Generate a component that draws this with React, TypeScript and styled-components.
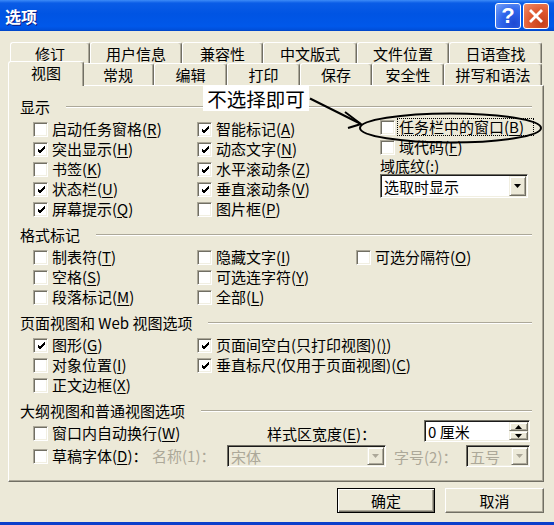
import React from 'react';
import styled, { createGlobalStyle, css } from 'styled-components';

const FONT = `"Noto Sans CJK SC", "Noto Sans", "DejaVu Sans", sans-serif`;

const GlobalStyle = createGlobalStyle`
  html, body { margin: 0; padding: 0; background: #ECE9D8; }
  body { font-family: ${FONT}; font-size: 15px; color: #000; }
  * { box-sizing: border-box; }
`;

const Window = styled.div`
  position: relative;
  width: 554px;
  height: 525px;
  display: flex;
  flex-direction: column;
  background: #ECE9D8;
  border-bottom: 3px solid #0B3FCB;
  overflow: hidden;
`;

const TitleBar = styled.div`
  height: 31px;
  flex: none;
  display: flex;
  align-items: center;
  padding: 0 5px;
  background: linear-gradient(to bottom, #3D8BF7 0%, #0A5CE6 10%, #0054E3 45%, #0058EA 85%, #0050DC 95%, #0043C4 100%);
`;

const Title = styled.span`
  color: #fff;
  font-weight: 700;
  font-size: 16px;
  line-height: 1;
  text-shadow: 1px 1px 0 #0A1883;
`;

const CaptionButtons = styled.div`
  margin-left: auto;
  align-self: flex-start;
  margin-top: 3px;
  display: flex;
  gap: 2px;
`;

const CaptionButton = styled.div<{ $kind: 'help' | 'close' }>`
  width: 26px;
  height: 26px;
  border: 1px solid #fff;
  border-radius: 3px;
  display: flex;
  align-items: center;
  justify-content: center;
  color: #fff;
  font-family: "Liberation Sans", Arial, sans-serif;
  font-weight: 700;
  font-size: 22px;
  line-height: 1;
  background: ${p =>
    p.$kind === 'close'
      ? 'radial-gradient(circle at 75% 80%, #C5401A 0%, #E05A31 50%, #F08E6C 100%)'
      : 'radial-gradient(circle at 75% 80%, #1E49D2 0%, #2F66EC 50%, #78A3F8 100%)'};
`;

const Body = styled.div`
  flex: 1;
  display: flex;
  flex-direction: column;
  padding: 11px 10px 0 8px;
`;

const TabStrip = styled.div`
  display: flex;
  flex-direction: column;
  padding-left: 2px;
`;

const TabRow = styled.div<{ $h: number }>`
  display: flex;
  height: ${p => p.$h}px;
`;

const Tab = styled.div<{ $w: number; $active?: boolean }>`
  flex: none;
  width: ${p => p.$w}px;
  height: 100%;
  display: flex;
  align-items: center;
  justify-content: center;
  background: #ECE9D8;
  border-top: 1px solid #fff;
  border-left: 1px solid #fff;
  border-right: 1px solid #716F64;
  box-shadow: inset -1px 0 #ACA899;
  border-radius: 3px 3px 0 0;
  font-size: 15px;
  line-height: 1;
  white-space: nowrap;
  ${p =>
    p.$active &&
    css`
      position: relative;
      z-index: 2;
      width: ${p.$w + 4}px;
      margin: -2px -2px 0 -2px;
      height: calc(100% + 3px);
      padding-bottom: 3px;
    `}
`;

const Panel = styled.div`
  position: relative;
  flex: none;
  width: 536px;
  height: 397px;
  border: 1px solid;
  border-color: #fff #716F64 #716F64 #fff;
  box-shadow: inset -1px -1px #ACA899;
  padding: 12px 11px 0 11px;
`;

const Section = styled.section`
  & + & {
    margin-top: 7px;
  }
`;

const SectionHead = styled.div`
  display: flex;
  align-items: center;
  gap: 16px;
  height: 18px;
  line-height: 18px;
  white-space: nowrap;
`;

const Rule = styled.div`
  flex: 1;
  border-top: 1px solid #ACA899;
  border-bottom: 1px solid #fff;
`;

const Columns = styled.div`
  display: flex;
  margin: 3px 0 0 13px;
`;

const Column = styled.div<{ $w?: number; $shift?: number }>`
  display: flex;
  flex-direction: column;
  ${p => (p.$w ? `width: ${p.$w}px; flex: none;` : 'flex: 1;')}
  margin-top: ${p => p.$shift ?? 0}px;
`;

const CheckRow = styled.div`
  display: flex;
  align-items: center;
  gap: 4px;
  height: 20px;
  white-space: nowrap;
`;

const Box = styled.span`
  width: 15px;
  height: 15px;
  flex: none;
  display: flex;
  align-items: center;
  justify-content: center;
  background: #fff;
  border: 1px solid;
  border-color: #ACA899 #fff #fff #ACA899;
  box-shadow: inset 1px 1px #716F64, inset -1px -1px #F1EFE2;
`;

const Label = styled.span<{ $focus?: boolean; $disabled?: boolean }>`
  line-height: 18px;
  color: ${p => (p.$disabled ? '#ACA899' : '#000')};
  ${p =>
    p.$focus &&
    css`
      border: 1px dotted #000;
      margin-left: -2px;
      padding: 0 9px 0 1px;
      line-height: 16px;
    `}
`;

const Key = styled.u`
  text-decoration: underline;
  text-underline-offset: 2px;
`;

const FieldLabel = styled.div`
  height: 17px;
  line-height: 17px;
  white-space: nowrap;
`;

const Field = styled.div<{ $w: number; $h: number; $disabled?: boolean }>`
  width: ${p => p.$w}px;
  height: ${p => p.$h}px;
  flex: none;
  display: flex;
  align-items: stretch;
  padding: 1px;
  border: 1px solid;
  border-color: #716F64 #fff #fff #716F64;
  box-shadow: inset 1px 1px #1A1A1A, inset -1px -1px #F1EFE2;
  background: ${p => (p.$disabled ? '#ECE9D8' : '#fff')};
`;

const SpinField = styled(Field)`
  align-self: start;
  margin-top: -2px;
`;

const FieldText = styled.span<{ $disabled?: boolean }>`
  flex: 1;
  display: flex;
  align-items: center;
  padding-left: 2px;
  line-height: 1;
  white-space: nowrap;
  color: ${p => (p.$disabled ? '#ACA899' : '#000')};
`;

const RaisedButton = styled.span`
  display: flex;
  align-items: center;
  justify-content: center;
  background: #ECE9D8;
  border: 1px solid;
  border-color: #F1EFE2 #716F64 #716F64 #F1EFE2;
  box-shadow: inset 1px 1px #fff, inset -1px -1px #ACA899;
`;

const DropButton = styled(RaisedButton)`
  width: 17px;
  flex: none;
`;

const SpinButtons = styled.span`
  width: 19px;
  flex: none;
  display: flex;
  flex-direction: column;
`;

const SpinButton = styled(RaisedButton)`
  flex: 1;
`;

const Rows = styled.div`
  display: flex;
  flex-direction: column;
  gap: 1px;
  margin: 2px 0 0 13px;
`;

const GridRow = styled.div<{ $cols: string }>`
  display: grid;
  grid-template-columns: ${p => p.$cols};
  align-items: center;
  height: 22px;
  white-space: nowrap;
`;

const Indented = styled.span`
  padding-left: 8px;
  color: #ACA899;
`;

const ButtonBar = styled.div`
  display: flex;
  justify-content: flex-end;
  gap: 10px;
  margin-top: 6px;
`;

const DialogButton = styled.div<{ $w: number; $default?: boolean }>`
  width: ${p => p.$w}px;
  height: 25px;
  display: flex;
  align-items: center;
  justify-content: center;
  background: #ECE9D8;
  line-height: 1;
  ${p =>
    p.$default
      ? css`
          border: 1px solid #000;
          box-shadow: inset 1px 1px #fff, inset -1px -1px #716F64, inset -2px -2px #ACA899;
        `
      : css`
          border: 1px solid;
          border-color: #fff #716F64 #716F64 #fff;
          box-shadow: inset -1px -1px #ACA899;
        `}
`;

const Note = styled.div`
  position: absolute;
  left: 203px;
  top: 86px;
  width: 106px;
  height: 25px;
  background: #fff;
  display: flex;
  align-items: center;
  justify-content: center;
  font-size: 19.5px;
  line-height: 1;
  z-index: 5;
`;

const Markup = styled.svg`
  position: absolute;
  left: 0;
  top: 0;
  pointer-events: none;
  z-index: 6;
`;

const Check = () => (
  <svg width="8" height="7" viewBox="0 0 7 7" shapeRendering="crispEdges">
    <polygon points="0,2.4 2.4,4.8 7,0.2 7,2.6 2.4,7.2 0,4.8" fill="#000" />
  </svg>
);

const Tri = ({ up, color = '#000' }: { up?: boolean; color?: string }) => (
  <svg width="7" height="4" viewBox="0 0 7 4">
    <polygon points={up ? '0,4 7,4 3.5,0' : '0,0 7,0 3.5,4'} fill={color} />
  </svg>
);

type OptProps = { text: string; k: string; checked?: boolean; focus?: boolean };

const Opt = ({ text, k, checked, focus }: OptProps) => (
  <CheckRow>
    <Box>{checked && <Check />}</Box>
    <Label $focus={focus}>
      {text}(<Key>{k}</Key>)
    </Label>
  </CheckRow>
);

const backTabs: [string, number][] = [
  ['修订', 80],
  ['用户信息', 92],
  ['兼容性', 81],
  ['中文版式', 94],
  ['文件位置', 92],
  ['日语查找', 93],
];

const frontTabs: [string, number][] = [
  ['视图', 72],
  ['常规', 72],
  ['编辑', 73],
  ['打印', 73],
  ['保存', 72],
  ['安全性', 72],
  ['拼写和语法', 98],
];

export default function App() {
  return (
    <>
      <GlobalStyle />
      <Window>
        <TitleBar>
          <Title>选项</Title>
          <CaptionButtons>
            <CaptionButton $kind="help">?</CaptionButton>
            <CaptionButton $kind="close">
              <svg width="14" height="14" viewBox="0 0 14 14">
                <path d="M2 2 L12 12 M12 2 L2 12" stroke="#fff" strokeWidth="2.8" strokeLinecap="square" />
              </svg>
            </CaptionButton>
          </CaptionButtons>
        </TitleBar>

        <Body>
          <TabStrip>
            <TabRow $h={21}>
              {backTabs.map(([t, w]) => (
                <Tab key={t} $w={w}>{t}</Tab>
              ))}
            </TabRow>
            <TabRow $h={22}>
              {frontTabs.map(([t, w], i) => (
                <Tab key={t} $w={w} $active={i === 0}>{t}</Tab>
              ))}
            </TabRow>
          </TabStrip>

          <Panel>
            <Section>
              <SectionHead>显示<Rule /></SectionHead>
              <Columns>
                <Column $w={164}>
                  <Opt text="启动任务窗格" k="R" />
                  <Opt text="突出显示" k="H" checked />
                  <Opt text="书签" k="K" />
                  <Opt text="状态栏" k="U" checked />
                  <Opt text="屏幕提示" k="Q" checked />
                </Column>
                <Column $w={183}>
                  <Opt text="智能标记" k="A" checked />
                  <Opt text="动态文字" k="N" checked />
                  <Opt text="水平滚动条" k="Z" checked />
                  <Opt text="垂直滚动条" k="V" checked />
                  <Opt text="图片框" k="P" />
                </Column>
                <Column $shift={-2}>
                  <Opt text="任务栏中的窗口" k="B" focus />
                  <Opt text="域代码" k="F" />
                  <FieldLabel>域底纹(<Key>:</Key>)</FieldLabel>
                  <Field $w={148} $h={24}>
                    <FieldText>选取时显示</FieldText>
                    <DropButton><Tri /></DropButton>
                  </Field>
                </Column>
              </Columns>
            </Section>

            <Section>
              <SectionHead>格式标记<Rule /></SectionHead>
              <Columns>
                <Column $w={164}>
                  <Opt text="制表符" k="T" />
                  <Opt text="空格" k="S" />
                  <Opt text="段落标记" k="M" />
                </Column>
                <Column $w={159}>
                  <Opt text="隐藏文字" k="I" />
                  <Opt text="可选连字符" k="Y" />
                  <Opt text="全部" k="L" />
                </Column>
                <Column>
                  <Opt text="可选分隔符" k="O" />
                </Column>
              </Columns>
            </Section>

            <Section>
              <SectionHead>页面视图和 Web 视图选项<Rule /></SectionHead>
              <Columns>
                <Column $w={164}>
                  <Opt text="图形" k="G" checked />
                  <Opt text="对象位置" k="I" />
                  <Opt text="正文边框" k="X" />
                </Column>
                <Column>
                  <Opt text="页面间空白(只打印视图)" k=")" checked />
                  <Opt text="垂直标尺(仅用于页面视图)" k="C" checked />
                </Column>
              </Columns>
            </Section>

            <Section>
              <SectionHead>大纲视图和普通视图选项<Rule /></SectionHead>
              <Rows>
                <GridRow $cols="234px 157px 106px">
                  <Opt text="窗口内自动换行" k="W" />
                  <span>样式区宽度(<Key>E</Key>)：</span>
                  <SpinField $w={106} $h={22}>
                    <FieldText>0 厘米</FieldText>
                    <SpinButtons>
                      <SpinButton><Tri up /></SpinButton>
                      <SpinButton><Tri /></SpinButton>
                    </SpinButtons>
                  </SpinField>
                </GridRow>
                <GridRow $cols="119px 75px 159px 80px 64px">
                  <CheckRow>
                    <Box />
                    <Label>草稿字体(<Key>D</Key>)：</Label>
                  </CheckRow>
                  <Label $disabled>名称(1)：</Label>
                  <Field $w={159} $h={22} $disabled>
                    <FieldText $disabled>宋体</FieldText>
                    <DropButton><Tri color="#ACA899" /></DropButton>
                  </Field>
                  <Indented>字号(2)：</Indented>
                  <Field $w={64} $h={22} $disabled>
                    <FieldText $disabled>五号</FieldText>
                    <DropButton><Tri color="#ACA899" /></DropButton>
                  </Field>
                </GridRow>
              </Rows>
            </Section>
          </Panel>

          <ButtonBar>
            <DialogButton $w={98} $default>确定</DialogButton>
            <DialogButton $w={99}>取消</DialogButton>
          </ButtonBar>
        </Body>

        <Note>不选择即可</Note>
        <Markup width="554" height="525" viewBox="0 0 554 525">
          <line x1="310" y1="98.5" x2="360" y2="123.5" stroke="#000" strokeWidth="2" />
          <polyline points="345,112 361,124 348,128" fill="none" stroke="#000" strokeWidth="2" />
          <ellipse cx="450.5" cy="128" rx="90.5" ry="14.5" fill="none" stroke="#000" strokeWidth="2" />
        </Markup>
      </Window>
    </>
  );
}
